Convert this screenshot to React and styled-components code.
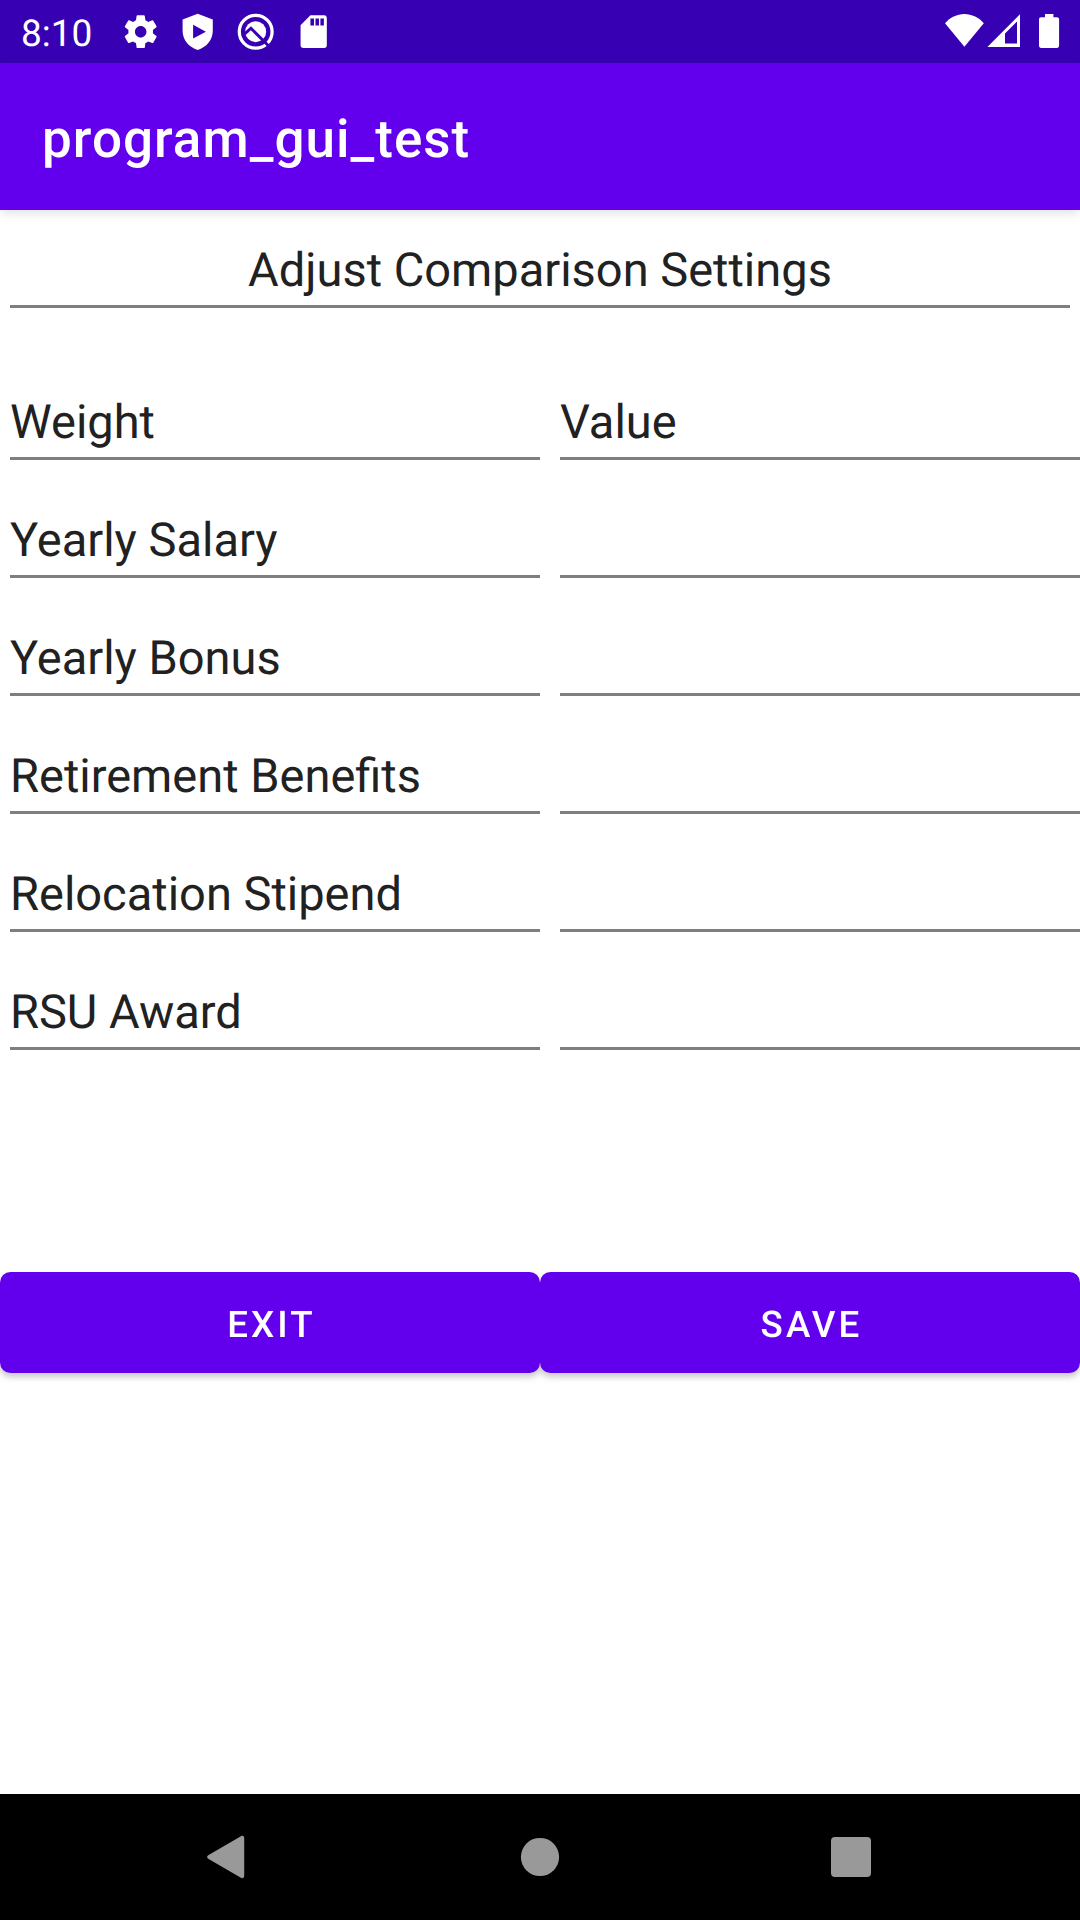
import React from "react";
import styled, { createGlobalStyle } from "styled-components";

const GlobalStyle = createGlobalStyle`
  *, *::before, *::after { box-sizing: border-box; }
  body {
    margin: 0;
    background: #fff;
    font-family: Roboto, "Noto Sans", sans-serif;
    text-rendering: geometricPrecision;
  }
`;

const Screen = styled.div`
  display: flex;
  flex-direction: column;
  width: 1080px;
  height: 1920px;
  overflow: hidden;
  background: #fff;
  color: #212121;
`;

const StatusBar = styled.header`
  display: flex;
  align-items: center;
  justify-content: space-between;
  height: 63px;
  padding: 0 18px 0 21px;
  background: #3700b3;
  color: #fff;
`;

const Notifications = styled.div`
  display: flex;
  align-items: center;
`;

const Clock = styled.time`
  width: 99.5px;
  padding-top: 6px;
  font-size: 37px;
  line-height: 42px;
`;

const Glyph = styled.svg`
  display: block;
  width: 39.375px;
  height: 39.375px;
  margin-right: 18.6px;
  fill: currentColor;
`;

const SystemIcons = styled.svg`
  display: block;
  width: 120px;
  height: 63px;
  fill: currentColor;
`;

const AppBar = styled.div`
  position: relative;
  display: flex;
  align-items: center;
  height: 147px;
  padding: 4px 42px 0;
  background: #6200ee;
  box-shadow: 0 3px 10px rgba(0, 0, 0, 0.12);
`;

const AppTitle = styled.h1`
  margin: 0;
  color: #fff;
  font-size: 53px;
  font-weight: 500;
  line-height: 62px;
  letter-spacing: 1.02px;
`;

const Content = styled.main`
  display: flex;
  flex: 1;
  flex-direction: column;
  padding-top: 28px;
`;

const Field = styled.div`
  height: 70px;
  padding-top: 1px;
  border-bottom: 3px solid #7f7f7f;
  font-size: 47px;
  line-height: 64px;
  white-space: nowrap;
  text-align: ${({ $align }) => $align || "left"};
`;

const Heading = styled(Field)`
  margin: 0 10px;
`;

const FieldInput = styled.input`
  display: block;
  width: 100%;
  height: 70px;
  padding: 1px 0 2px;
  border: 0;
  border-bottom: 3px solid #7f7f7f;
  border-radius: 0;
  outline: 0;
  background: transparent;
  color: inherit;
  font: 47px Roboto, sans-serif;
`;

const Form = styled.section`
  display: grid;
  grid-template-columns: 530px 520px;
  grid-auto-rows: 70px;
  gap: 48px 20px;
  margin: 82px 0 0 10px;
`;

const Actions = styled.div`
  display: grid;
  grid-template-columns: 1fr 1fr;
  margin-top: 222px;
  filter: drop-shadow(0 4px 3px rgba(0, 0, 0, 0.22));
`;

const Button = styled.button`
  height: 101px;
  padding: 4px 0 0 3px;
  border: 0;
  border-radius: 10.5px;
  background: #6200ee;
  color: #fff;
  font: 500 36.75px/44px Roboto, sans-serif;
  letter-spacing: 0.083em;
  text-rendering: inherit;
  text-transform: uppercase;
`;

const NavigationBar = styled.nav`
  display: flex;
  align-items: center;
  justify-content: space-around;
  height: 126px;
  padding: 0 73px;
  background: #000;
`;

const NavIcon = styled.svg`
  display: block;
  width: 63px;
  height: 63px;
  fill: #999;
`;

const rows = ["Yearly Salary", "Yearly Bonus", "Retirement Benefits", "Relocation Stipend", "RSU Award"];

function SettingsGlyph() {
  return (
    <Glyph viewBox="0 0 24 24">
      <path d="M19.43 12.98c.04-.32.07-.64.07-.98s-.03-.66-.07-.98l2.11-1.65c.19-.15.24-.42.12-.64l-2-3.46c-.12-.22-.39-.3-.61-.22l-2.49 1c-.52-.4-1.08-.73-1.69-.98l-.38-2.65C14.46 2.18 14.25 2 14 2h-4c-.25 0-.46.18-.49.42l-.38 2.65c-.61.25-1.17.59-1.69.98l-2.49-1c-.23-.09-.49 0-.61.22l-2 3.46c-.13.22-.07.49.12.64l2.11 1.65c-.04.32-.07.65-.07.98s.03.66.07.98l-2.11 1.65c-.19.15-.24.42-.12.64l2 3.46c.12.22.39.3.61.22l2.49-1c.52.4 1.08.73 1.69.98l.38 2.65c.03.24.24.42.49.42h4c.25 0 .46-.18.49-.42l.38-2.65c.61-.25 1.17-.59 1.69-.98l2.49 1c.23.09.49 0 .61-.22l2-3.46c.12-.22.07-.49-.12-.64l-2.11-1.65zM12 15.5c-1.93 0-3.5-1.57-3.5-3.5s1.57-3.5 3.5-3.5 3.5 1.57 3.5 3.5-1.57 3.5-3.5 3.5z" />
    </Glyph>
  );
}

function ShieldGlyph() {
  return (
    <Glyph viewBox="0 0 24 24">
      <path fillRule="evenodd" d="M12 1.1 2.8 4.6V11.5C2.8 17 6.7 21.7 12 23.1 17.3 21.7 21.2 17 21.2 11.5V4.6ZM9.2 7.8 17 12 9.2 16.2Z" />
    </Glyph>
  );
}

function SearchRingGlyph() {
  return (
    <Glyph viewBox="0 0 24 24">
      <circle cx="12" cy="12" r="10" fill="none" stroke="currentColor" strokeWidth="2" />
      <circle cx="12" cy="12" r="6.4" />
      <path fill="none" stroke="#3700b3" strokeWidth="1.8" d="M5.300 13.300 9.100 9.900 20.400 21.200" />
    </Glyph>
  );
}

function SdCardGlyph() {
  return (
    <Glyph viewBox="0 0 24 24">
      <path fillRule="evenodd" d="M18.4 2H10L4 8v12.3c0 1 .7 1.7 1.7 1.7h12.7c1 0 1.6-.7 1.6-1.7V3.7c0-1-.6-1.7-1.6-1.7ZM10 4h2.2v4.2H10ZM13.1 4h2.1v4.2h-2.1ZM16.1 4h2.1v4.2h-2.1Z" />
    </Glyph>
  );
}

export default function App() {
  return (
    <>
      <GlobalStyle />
      <Screen>
        <StatusBar>
          <Notifications>
            <Clock>8:10</Clock>
            <SettingsGlyph />
            <ShieldGlyph />
            <SearchRingGlyph />
            <SdCardGlyph />
          </Notifications>
          <SystemIcons viewBox="942 0 120 63">
            <path d="M964.4 46.7 945 23.2c5-5.7 12-9.2 19.4-9.2s14.4 3.5 19.4 9.2Z" />
            <path fillRule="evenodd" d="M987.4 47 1020 14.2V47ZM1005 33.6V43.5h12V21.6Z" />
            <path d="M1045 14h8.4v3.3h3.6c1.2 0 2.1.9 2.1 2.1v26.4c0 1.2-.9 2.1-2.1 2.1h-15.9c-1.2 0-2.1-.9-2.1-2.1V19.4c0-1.2.9-2.1 2.1-2.1h3.9Z" />
          </SystemIcons>
        </StatusBar>
        <AppBar>
          <AppTitle>program_gui_test</AppTitle>
        </AppBar>
        <Content>
          <Heading $align="center">Adjust Comparison Settings</Heading>
          <Form>
            <Field>Weight</Field>
            <Field>Value</Field>
            {rows.map((name) => (
              <React.Fragment key={name}>
                <Field>{name}</Field>
                <FieldInput aria-label={name} />
              </React.Fragment>
            ))}
          </Form>
          <Actions>
            <Button>Exit</Button>
            <Button>Save</Button>
          </Actions>
        </Content>
        <NavigationBar>
          <NavIcon viewBox="1 0.5 63 63">
            <path d="M12.2 29.8 44.9 10.7c1.7-1 3.3 0 3.3 1.7v38.2c0 1.7-1.6 2.7-3.3 1.7L12.2 33.2c-1.4-.8-1.4-2.6 0-3.4Z" />
          </NavIcon>
          <NavIcon viewBox="-0.5 0.5 63 63">
            <circle cx="31.5" cy="31.5" r="19.1" />
          </NavIcon>
          <NavIcon viewBox="0.5 0.5 63 63">
            <rect x="11.5" y="11.5" width="40" height="40" rx="4" />
          </NavIcon>
        </NavigationBar>
      </Screen>
    </>
  );
}
